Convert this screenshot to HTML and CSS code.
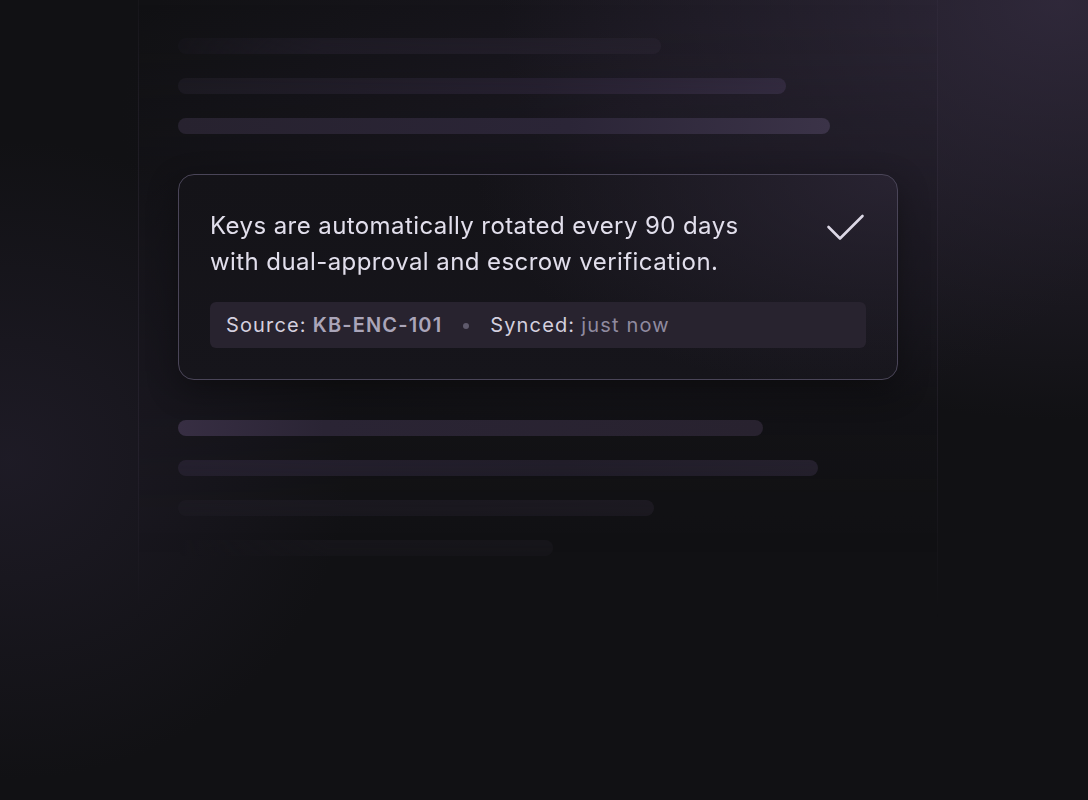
FILE: index.html
```html
<!DOCTYPE html>
<html lang="en">
<head>
<meta charset="utf-8">
<title>Key rotation</title>
<link rel="stylesheet" href="styles.css">
</head>
<body>
<div class="stage">
  <div class="panel">
    <div class="bar bar-a" style="width:483px"></div>
    <div class="bar bar-b" style="width:608px"></div>
    <div class="bar bar-c" style="width:652px"></div>
    <div class="card">
      <div class="card-head">
        <p class="card-text">Keys are automatically rotated every 90 days with dual-approval and escrow verification.</p>
        <svg class="check" width="40" height="40" viewBox="0 0 40 40" aria-hidden="true">
          <path d="M3.5 20 L15 31.5 L37.5 9" fill="none" stroke="#dcd8e6" stroke-width="2.6" stroke-linecap="round" stroke-linejoin="round"/>
        </svg>
      </div>
      <div class="meta">
        <span class="meta-label">Source:</span>
        <span class="meta-code">KB-ENC-101</span>
        <span class="meta-dot"></span>
        <span class="meta-label">Synced:</span>
        <span class="meta-time">just now</span>
      </div>
    </div>
    <div class="bar bar-d" style="width:585px"></div>
    <div class="bar bar-e" style="width:640px"></div>
    <div class="bar bar-f" style="width:476px"></div>
    <div class="bar bar-g" style="width:375px"></div>
  </div>
</div>
</body>
</html>
```

FILE: styles.css
```css
* { box-sizing: border-box; }

html, body {
  margin: 0;
  padding: 0;
  background: #111114;
}

body {
  font-family: Inter, "Noto Sans", sans-serif;
}

.stage {
  position: relative;
  width: 1088px;
  height: 800px;
  overflow: hidden;
  background:
    radial-gradient(ellipse 560px 420px at 1060px 0px, rgba(52, 44, 64, 0.85), rgba(52, 44, 64, 0) 100%),
    radial-gradient(ellipse 340px 320px at 10px 460px, rgba(38, 33, 49, 0.6), rgba(38, 33, 49, 0) 100%),
    radial-gradient(ellipse 520px 320px at 640px 120px, rgba(34, 29, 43, 0.5), rgba(34, 29, 43, 0) 100%),
    #111114;
}

.panel {
  margin-left: 138px;
  width: 800px;
  height: 620px;
  padding: 38px 40px 0 39px;
  display: flex;
  flex-direction: column;
  align-items: flex-start;
  gap: 24px;
  border-left: 1px solid rgba(120, 110, 140, 0.12);
  border-right: 1px solid rgba(120, 110, 140, 0.12);
  background: linear-gradient(180deg, rgba(26, 23, 33, 0.0) 0%, rgba(24, 22, 30, 0.3) 40%, rgba(20, 19, 25, 0.0) 90%);
  -webkit-mask-image: linear-gradient(180deg, rgba(0,0,0,0.45) 0%, #000 16%, #000 72%, rgba(0,0,0,0) 100%);
  mask-image: linear-gradient(180deg, rgba(0,0,0,0.45) 0%, #000 16%, #000 72%, rgba(0,0,0,0) 100%);
}

.bar {
  height: 16px;
  border-radius: 8px;
  flex: none;
}

.bar-a { background: linear-gradient(90deg, rgba(40, 35, 50, 0.2), #211d29 30%, #27222f 100%); }
.bar-b { background: linear-gradient(90deg, #1c1a22, #262030 60%, #332b40 100%); }
.bar-c { background: linear-gradient(90deg, #27222f, #2b2537 60%, #3b3348 100%); }
.bar-d { background: linear-gradient(90deg, #372e43, #2a2434 25%, #28222f 100%); }
.bar-e { background: linear-gradient(90deg, #262130, #231f2c 60%, #272230 100%); }
.bar-f { background: linear-gradient(90deg, #1d1b23, #1f1c25 60%, #221e28 100%); }
.bar-g { background: linear-gradient(90deg, rgba(26, 24, 31, 0), #1c1a21 40%, #1d1b22 100%); }

.card {
  width: 720px;
  margin: 16px 0;
  padding: 33px 31px 31px;
  border-radius: 16px;
  border: 1px solid #4a4558;
  background:
    radial-gradient(ellipse 420px 220px at 100% 0%, rgba(44, 38, 54, 0.85), rgba(44, 38, 54, 0) 100%),
    linear-gradient(180deg, #141318, #16151b);
  box-shadow: 0 10px 30px rgba(0, 0, 0, 0.35);
  display: flex;
  flex-direction: column;
  gap: 22px;
}

.card-head {
  display: flex;
  justify-content: space-between;
  align-items: flex-start;
}

.card-text {
  margin: 0;
  width: 570px;
  font-size: 24px;
  line-height: 36px;
  color: #e2dfec;
  letter-spacing: 0.42px;
}

.check {
  flex: none;
  margin-top: -1px;
  margin-right: 1px;
}

.meta {
  height: 46px;
  border-radius: 6px;
  background: #28232f;
  padding: 0 16px;
  display: flex;
  align-items: center;
  font-size: 20px;
  letter-spacing: 1.15px;
  white-space: pre;
}

.meta-label { color: #d4d0df; }
.meta-label + .meta-code,
.meta-label + .meta-time { margin-left: 6px; }
.meta-code { color: #aaa5b9; font-weight: 600; }
.meta-time { color: #8f8a9f; }

.meta-dot {
  width: 6px;
  height: 6px;
  border-radius: 50%;
  background: #5f5a6c;
  margin: 2px 21px 0 21px;
}
```
